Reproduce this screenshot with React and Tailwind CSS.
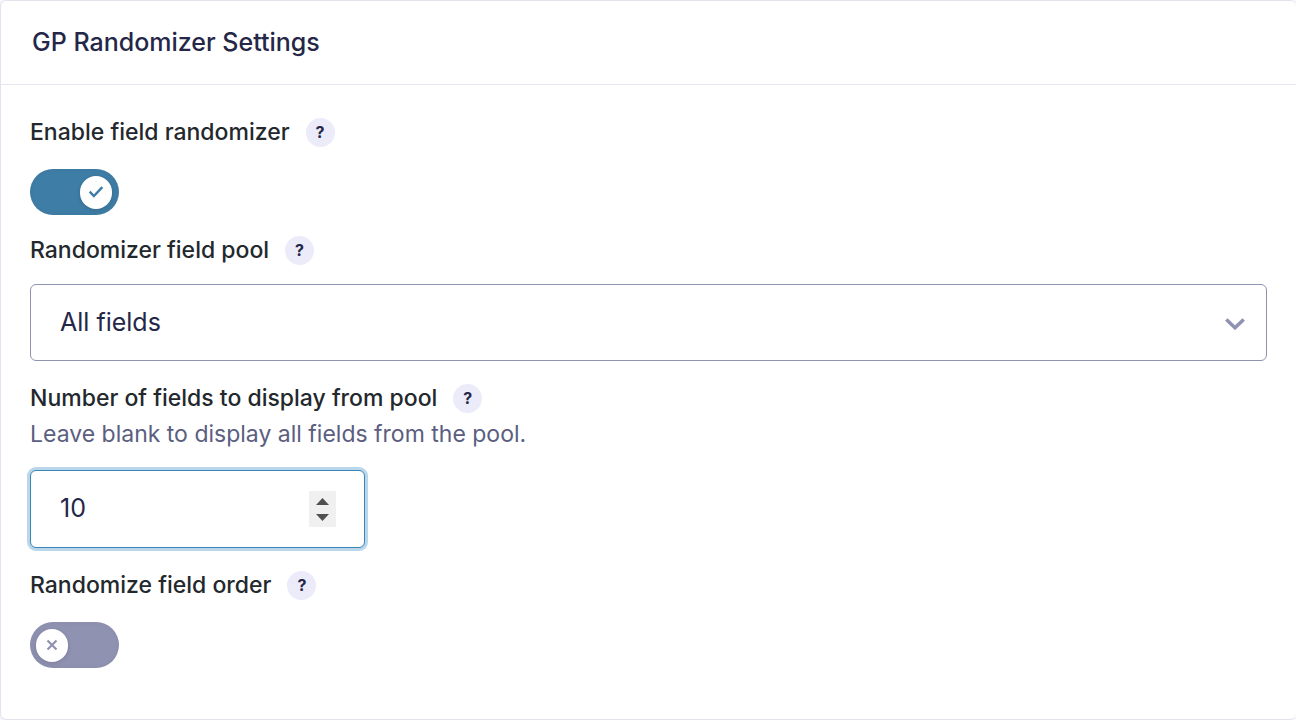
import { useState } from "react";

function Help({ topic }) {
  return (
    <button
      type="button"
      aria-label={`Help: ${topic}`}
      className="flex size-[29px] shrink-0 items-center justify-center rounded-full bg-[#ecebf9] text-base leading-none font-bold text-[#242748]"
    >
      ?
    </button>
  );
}

function FieldLabel({ htmlFor, children }) {
  return (
    <div className="flex h-[30px] items-center gap-4">
      <label htmlFor={htmlFor} className="text-[23px] leading-[30px] font-medium">
        {children}
      </label>
      <Help topic={children} />
    </div>
  );
}

function Toggle({ id, checked, onChange }) {
  return (
    <label
      htmlFor={id}
      className={`flex h-[46px] w-[89px] cursor-pointer items-center rounded-full pr-[7px] pl-1.5 shadow-[inset_0_0_5px_rgba(0,0,0,0.06)] ${
        checked ? "justify-end bg-[#3e7da6]" : "justify-start bg-[#9092b2]"
      }`}
    >
      <input
        id={id}
        type="checkbox"
        checked={checked}
        onChange={(e) => onChange(e.target.checked)}
        className="sr-only"
      />
      <span className="flex h-[33px] w-8 items-center justify-center rounded-full bg-white shadow-[0_1px_4px_rgba(0,0,0,0.16)]">
        {checked ? (
          <svg viewBox="0 0 16 14" className="h-3.5 w-4" fill="none" stroke="#3e7da6" strokeWidth="2.4" aria-hidden="true">
            <path d="M1.7 6.7 5.9 11 14.3 2.2" />
          </svg>
        ) : (
          <svg viewBox="0 0 12 12" className="size-3" fill="none" stroke="#9092b2" strokeWidth="2.2" aria-hidden="true">
            <path d="M1.5 1.5 10.5 10.5M10.5 1.5 1.5 10.5" />
          </svg>
        )}
      </span>
    </label>
  );
}

export default function App() {
  const [enabled, setEnabled] = useState(true);
  const [pool, setPool] = useState("all");
  const [count, setCount] = useState("10");
  const [order, setOrder] = useState(false);
  const step = (n) => setCount(String(Math.max(0, Number(count) + n)));

  return (
    <div className="min-h-screen bg-[#f6f8fc] font-['Inter','Liberation_Sans',sans-serif] text-[#23282d]">
      <section className="flex min-h-screen flex-col rounded-md border border-r-0 border-[#e2e3ef] bg-white">
        <header className="border-b border-[#e6e6f0] px-[31px] py-6">
          <h1 className="text-[25px] leading-[35px] font-medium text-[#242748]">GP Randomizer Settings</h1>
        </header>

        <form className="flex flex-col pt-8 pr-[29px] pb-12 pl-[29px]" onSubmit={(e) => e.preventDefault()}>
          <FieldLabel htmlFor="enable">Enable field randomizer</FieldLabel>
          <div className="mt-[22px] flex">
            <Toggle id="enable" checked={enabled} onChange={setEnabled} />
          </div>

          <div className="mt-5">
            <FieldLabel htmlFor="pool">Randomizer field pool</FieldLabel>
          </div>
          <div className="relative mt-[19px]">
            <select
              id="pool"
              value={pool}
              onChange={(e) => setPool(e.target.value)}
              className="h-[77px] w-full appearance-none rounded-md border border-[#9092b2] bg-white px-[29px] text-[25px] text-[#242748]"
            >
              <option value="all">All fields</option>
            </select>
            <svg
              viewBox="0 0 20 12"
              className="pointer-events-none absolute top-[34px] right-[22px] h-3 w-5"
              fill="none"
              stroke="#9092b2"
              strokeWidth="3.6"
              aria-hidden="true"
            >
              <path d="M1.3 1.5 10 9.7 18.7 1.5" />
            </svg>
          </div>

          <div className="mt-[22px]">
            <FieldLabel htmlFor="count">Number of fields to display from pool</FieldLabel>
          </div>
          <p id="count-hint" className="mt-1.5 text-[23px] leading-[30px] text-[#5b5e80]">
            Leave blank to display all fields from the pool.
          </p>
          <div className="mt-[21px] flex h-[78px] w-[335px] max-w-full items-center rounded-md border border-[#3985b7] bg-white px-[29px] pr-7 ring-3 ring-[#bad6ea]">
            <input
              id="count"
              type="number"
              aria-describedby="count-hint"
              value={count}
              onChange={(e) => setCount(e.target.value)}
              className="min-w-0 flex-1 appearance-none bg-transparent text-[25px] text-[#242748] outline-none [appearance:textfield] [&::-webkit-inner-spin-button]:appearance-none"
            />
            <div className="flex h-9 w-[27px] flex-col bg-[#f0f0f0]">
              <button type="button" aria-label="Increase" onClick={() => step(1)} className="flex flex-1 items-end justify-center pb-1">
                <svg viewBox="0 0 13 7" className="h-[7px] w-[13px]" fill="#505050" aria-hidden="true">
                  <path d="M0 7 6.5 0 13 7z" />
                </svg>
              </button>
              <button type="button" aria-label="Decrease" onClick={() => step(-1)} className="flex flex-1 items-start justify-center pt-[5px]">
                <svg viewBox="0 0 13 7" className="h-[7px] w-[13px]" fill="#505050" aria-hidden="true">
                  <path d="M0 0 6.5 7 13 0z" />
                </svg>
              </button>
            </div>
          </div>

          <div className="mt-[22px]">
            <FieldLabel htmlFor="order">Randomize field order</FieldLabel>
          </div>
          <div className="mt-[22px] flex">
            <Toggle id="order" checked={order} onChange={setOrder} />
          </div>
        </form>
      </section>
    </div>
  );
}
